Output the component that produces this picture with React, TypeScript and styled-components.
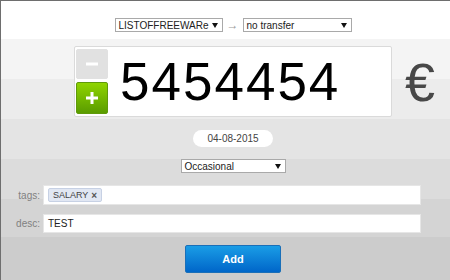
import styled, { createGlobalStyle } from "styled-components";

const Global = createGlobalStyle`
    html, body {
        margin: 0;
        padding: 0;
    }
    body {
        font-family: "Liberation Sans", Arial, sans-serif;
        color: #222;
    }
    * {
        box-sizing: border-box;
    }
`;

export default function App() {
    return (
        <>
            <Global />
            <Page>
                <CenterRow style={{ marginTop: 17 }}>
                    <Select width={108}>
                        LISTOFFREEWARe
                        <Caret />
                    </Select>
                    <Arrow>→</Arrow>
                    <Select width={109}>
                        no transfer
                        <Caret />
                    </Select>
                </CenterRow>

                <AmountRow>
                    <span />
                    <AmountBox>
                        <Steppers>
                            <StepButton>
                                <svg width="12" height="12" viewBox="0 0 12 12">
                                    <rect x="0" y="4.5" width="12" height="3" fill="#fff" />
                                </svg>
                            </StepButton>
                            <StepButton primary>
                                <svg width="12" height="12" viewBox="0 0 12 12">
                                    <rect x="0" y="4.5" width="12" height="3" fill="#fff" />
                                    <rect x="4.5" y="0" width="3" height="12" fill="#fff" />
                                </svg>
                            </StepButton>
                        </Steppers>
                        <Amount>5454454</Amount>
                    </AmountBox>
                    <Currency>€</Currency>
                </AmountRow>

                <CenterRow style={{ marginTop: 13 }}>
                    <DatePill>04-08-2015</DatePill>
                </CenterRow>

                <CenterRow style={{ marginTop: 12 }}>
                    <Select width={105}>
                        Occasional
                        <Caret />
                    </Select>
                </CenterRow>

                <FormRow style={{ marginTop: 12 }}>
                    <Label>tags:</Label>
                    <Field height={20}>
                        <Tag>
                            SALARY <TagClose>×</TagClose>
                        </Tag>
                    </Field>
                </FormRow>

                <FormRow style={{ marginTop: 9 }}>
                    <Label>desc:</Label>
                    <Field height={19}>
                        <FieldText>TEST</FieldText>
                    </Field>
                </FormRow>

                <CenterRow style={{ marginTop: 12 }}>
                    <AddButton>Add</AddButton>
                </CenterRow>
            </Page>
        </>
    );
}

const Page = styled.div`
    height: 280px;
    border-top: 1px solid #6e6e6e;
    border-left: 1px solid #6e6e6e;
    overflow: hidden;
    background: linear-gradient(
        to bottom,
        #ffffff 0 38px,
        #f4f4f4 38px 78px,
        #ececec 78px 118px,
        #e4e4e4 118px 158px,
        #dcdcdc 158px 198px,
        #d4d4d4 198px 236px,
        #cccccc 236px
    );
`;

const CenterRow = styled.div`
    display: flex;
    justify-content: center;
    align-items: center;
    gap: 4px;
    padding-left: 15px;
`;

const Select = styled.div<{ width: number }>`
    width: ${p => p.width}px;
    height: 14px;
    display: flex;
    align-items: center;
    justify-content: space-between;
    padding: 0 4px 0 3px;
    background: #fff;
    border: 1px solid #a9a9a9;
    font-size: 10px;
    color: #222;
    white-space: nowrap;
`;

const Caret = styled.span`
    width: 0;
    height: 0;
    border-left: 3px solid transparent;
    border-right: 3px solid transparent;
    border-top: 5px solid #111;
`;

const Arrow = styled.span`
    font-size: 12px;
    color: #9a9a9a;
    line-height: 14px;
`;

const AmountRow = styled.div`
    display: grid;
    grid-template-columns: 1fr 318px 1fr;
    align-items: center;
    margin-top: 14px;
    padding-left: 15px;
`;

const AmountBox = styled.div`
    height: 71px;
    display: flex;
    align-items: center;
    background: #fff;
    border: 1px solid #dadada;
    border-radius: 2px;
    padding: 2px 1px;
`;

const Steppers = styled.div`
    display: flex;
    flex-direction: column;
    gap: 3px;
`;

const StepButton = styled.div<{ primary?: boolean }>`
    width: 32px;
    height: ${p => (p.primary ? 32 : 30)}px;
    display: flex;
    align-items: center;
    justify-content: center;
    border-radius: 2px;
    background: ${p => (p.primary ? "linear-gradient(to bottom, #8fd400, #5a9c00)" : "#e1e1e1")};
    border: 1px solid ${p => (p.primary ? "#5f9a0a" : "#e1e1e1")};
`;

const Amount = styled.div`
    margin-left: 12px;
    font-size: 53px;
    letter-spacing: 2px;
    line-height: 1;
    color: #000;
`;

const Currency = styled.div`
    padding-left: 13px;
    font-size: 54px;
    line-height: 1;
    color: #484848;
`;

const DatePill = styled.div`
    width: 80px;
    height: 17px;
    display: flex;
    align-items: center;
    justify-content: center;
    background: #fff;
    border-radius: 9px;
    font-size: 10px;
    color: #444;
`;

const FormRow = styled.div`
    display: grid;
    grid-template-columns: 39px 378px;
    column-gap: 3px;
    align-items: center;
`;

const Label = styled.div`
    text-align: right;
    font-size: 10px;
    color: #808080;
`;

const Field = styled.div<{ height: number }>`
    height: ${p => p.height}px;
    display: flex;
    align-items: center;
    padding: 0 4px;
    background: #fff;
    border: 1px solid #e6e6e6;
`;

const FieldText = styled.span`
    font-size: 10px;
    color: #222;
`;

const Tag = styled.span`
    height: 14px;
    display: inline-flex;
    align-items: center;
    gap: 3px;
    padding: 0 4px;
    background: #e1e7f3;
    border: 1px solid #c7d1e4;
    border-radius: 2px;
    font-size: 9px;
    color: #444;
`;

const TagClose = styled.span`
    font-size: 10px;
    font-weight: bold;
    color: #555;
`;

const AddButton = styled.div`
    width: 96px;
    height: 28px;
    display: flex;
    align-items: center;
    justify-content: center;
    background: linear-gradient(to bottom, #1a9de6, #0066c9);
    border: 1px solid #1a6fb8;
    border-radius: 2px;
    color: #fff;
    font-size: 11px;
    font-weight: bold;
`;
